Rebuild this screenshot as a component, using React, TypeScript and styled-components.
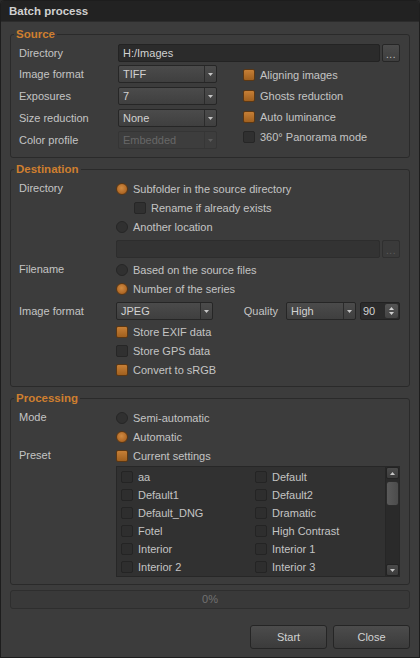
import React from "react";
import styled, { createGlobalStyle } from "styled-components";

const GlobalStyle = createGlobalStyle`
  html, body { margin: 0; padding: 0; background: #2b2b2b; }
  body {
    font-family: "Liberation Sans", Arial, sans-serif;
    font-size: 11px;
    color: #c4c4c4;
  }
  * { box-sizing: border-box; }
`;

const Window = styled.div`
  width: 420px;
  height: 658px;
  display: flex;
  flex-direction: column;
  background: #3c3c3c;
  border: 1px solid #1d1d1d;
  border-radius: 4px 4px 0 0;
  overflow: hidden;
`;

const TitleBar = styled.div`
  height: 21px;
  flex: none;
  display: flex;
  align-items: center;
  padding-left: 8px;
  background: #222222;
  border-bottom: 1px solid #2c2c2c;
  font-weight: bold;
  font-size: 11.5px;
  color: #d0d0d0;
`;

const Body = styled.div`
  flex: 1;
  display: flex;
  flex-direction: column;
  gap: 4px;
  padding: 5px 9px 8px 9px;
`;

const Group = styled.fieldset<{ $pb?: number }>`
  margin: 0;
  padding: 3px 9px ${(p) => p.$pb ?? 7}px 8px;
  border: 1px solid #2a2a2a;
  border-radius: 3px;
  min-inline-size: 0;
  display: flex;
  flex-direction: column;
`;

const Legend = styled.legend`
  margin-left: -5px;
  padding: 0 2px;
  font-weight: bold;
  font-size: 11.5px;
  line-height: 14px;
  color: #cf7f2f;
`;

const Field = styled.div<{ $label: number; $mt?: number }>`
  display: grid;
  grid-template-columns: ${(p) => p.$label}px 1fr;
  margin-top: ${(p) => p.$mt ?? 0}px;
`;

const Label = styled.div<{ $h: number }>`
  height: ${(p) => p.$h}px;
  line-height: ${(p) => p.$h}px;
  white-space: nowrap;
`;

const Stack = styled.div`
  display: flex;
  flex-direction: column;
`;

const Row = styled.div<{ $mt?: number; $mb?: number }>`
  display: flex;
  align-items: center;
  margin-top: ${(p) => p.$mt ?? 0}px;
  margin-bottom: ${(p) => p.$mb ?? 0}px;
`;

const PathInput = styled.div<{ $disabled?: boolean }>`
  flex: 1;
  height: 18px;
  line-height: 16px;
  padding-left: 4px;
  border: 1px solid ${(p) => (p.$disabled ? "#2d2d2d" : "#232323")};
  border-radius: 2px;
  background: ${(p) => (p.$disabled ? "#333333" : "#2b2b2b")};
  color: #d2d2d2;
`;

const DotsButton = styled.div<{ $disabled?: boolean }>`
  width: 18px;
  height: 18px;
  margin-left: 2px;
  display: flex;
  align-items: center;
  justify-content: center;
  border: 1px solid ${(p) => (p.$disabled ? "#2f2f2f" : "#262626")};
  border-radius: 2px;
  background: ${(p) =>
    p.$disabled ? "#3a3a3a" : "linear-gradient(#4b4b4b, #3e3e3e)"};
  color: ${(p) => (p.$disabled ? "#5e5e5e" : "#c4c4c4")};
  font-size: 10px;
  letter-spacing: 0.5px;
  line-height: 10px;
  padding-top: 3px;
`;

const ComboBox = styled.div<{ $w: number; $disabled?: boolean }>`
  width: ${(p) => p.$w}px;
  height: 18px;
  flex: none;
  display: flex;
  border: 1px solid ${(p) => (p.$disabled ? "#353535" : "#262626")};
  border-radius: 2px;
  background: ${(p) =>
    p.$disabled ? "#3d3d3d" : "linear-gradient(#4b4b4b, #3f3f3f)"};
  color: ${(p) => (p.$disabled ? "#676767" : "#d2d2d2")};
`;

const ComboText = styled.span`
  flex: 1;
  padding-left: 4px;
  line-height: 16px;
  white-space: nowrap;
  overflow: hidden;
`;

const ComboArrow = styled.span<{ $disabled?: boolean }>`
  width: 12px;
  display: flex;
  align-items: center;
  justify-content: center;
  border-left: 1px solid ${(p) => (p.$disabled ? "#363636" : "#2b2b2b")};
`;

const Caret = ({ up, color = "#c6c6c6" }: { up?: boolean; color?: string }) => (
  <svg width="5" height="3" viewBox="0 0 5 3">
    <path d={up ? "M0 3h5L2.5 0z" : "M0 0h5L2.5 3z"} fill={color} />
  </svg>
);

const Combo = ({ w, value, disabled }: { w: number; value: string; disabled?: boolean }) => (
  <ComboBox $w={w} $disabled={disabled}>
    <ComboText>{value}</ComboText>
    <ComboArrow $disabled={disabled}>
      <Caret color={disabled ? "#5c5c5c" : "#c6c6c6"} />
    </ComboArrow>
  </ComboBox>
);

const OptionRow = styled.div<{ $h?: number; $indent?: number }>`
  height: ${(p) => p.$h ?? 19}px;
  display: flex;
  align-items: center;
  gap: 5px;
  padding-left: ${(p) => p.$indent ?? 0}px;
  white-space: nowrap;
`;

const Box = styled.span<{ $on?: boolean }>`
  width: 12px;
  height: 12px;
  flex: none;
  border-radius: 2px;
  border: 1px solid ${(p) => (p.$on ? "#5a3714" : "#262626")};
  background: ${(p) =>
    p.$on ? "linear-gradient(#c67f36, #a0601f)" : "#303030"};
`;

const Dot = styled.span<{ $on?: boolean }>`
  width: 12px;
  height: 12px;
  flex: none;
  border-radius: 50%;
  border: 1px solid ${(p) => (p.$on ? "#5a3714" : "#262626")};
  background: ${(p) =>
    p.$on
      ? "radial-gradient(circle at 45% 40%, #cf8a42 0%, #ad6624 70%)"
      : "#303030"};
`;

const SourceColumns = styled.div`
  display: flex;
  margin-top: 3px;
`;

const LeftStack = styled.div`
  display: flex;
  flex-direction: column;
  gap: 4px;
`;

const RightStack = styled.div`
  display: flex;
  flex-direction: column;
  padding-left: 26px;
`;

const QualityLabel = styled.span`
  margin-left: auto;
  margin-right: 8px;
`;

const SpinBox = styled.div`
  width: 40px;
  height: 18px;
  margin-left: 4px;
  display: flex;
  align-items: center;
  border: 1px solid #222222;
  border-radius: 2px;
  background: #2b2b2b;
  color: #d2d2d2;
`;

const SpinText = styled.span`
  flex: 1;
  padding-left: 2px;
`;

const SpinButtons = styled.span`
  width: 13px;
  height: 14px;
  margin-right: 1px;
  display: flex;
  flex-direction: column;
  align-items: center;
  justify-content: center;
  gap: 2px;
  border-radius: 2px;
  background: linear-gradient(#545454, #444444);
`;

const ListBox = styled.div`
  height: 111px;
  margin-top: 1px;
  display: flex;
  border: 1px solid #272727;
  background: #313131;
`;

const ListGrid = styled.div`
  flex: 1;
  display: grid;
  grid-template-columns: 1fr 1fr;
  grid-auto-rows: 18px;
  padding-top: 1px;
`;

const ListItem = styled.div`
  display: flex;
  align-items: center;
  gap: 5px;
  padding-left: 4px;
  white-space: nowrap;
`;

const ListCheck = styled.span`
  width: 12px;
  height: 12px;
  border-radius: 2px;
  border: 1px solid #242424;
  background: #2e2e2e;
`;

const ScrollBar = styled.div`
  width: 14px;
  display: flex;
  flex-direction: column;
  background: #2a2a2a;
  border-left: 1px solid #262626;
`;

const ScrollButton = styled.div`
  height: 12px;
  display: flex;
  align-items: center;
  justify-content: center;
  border: 1px solid #232323;
  border-radius: 2px;
  background: linear-gradient(#4a4a4a, #3c3c3c);
`;

const ScrollThumb = styled.div`
  height: 25px;
  margin: 2px 0 0;
  border: 1px solid #2c2c2c;
  border-radius: 3px;
  background: linear-gradient(90deg, #5a5a5a, #4c4c4c);
`;

const ScrollTrack = styled.div`
  flex: 1;
`;

const Progress = styled.div`
  height: 19px;
  margin-top: 1px;
  border: 1px solid #2e2e2e;
  border-radius: 3px;
  background: #393939;
  color: #727272;
  text-align: center;
  line-height: 17px;
`;

const Footer = styled.div`
  margin-top: 12px;
  display: flex;
  justify-content: flex-end;
  gap: 6px;
`;

const Button = styled.button`
  width: 77px;
  height: 24px;
  padding: 0;
  border: 1px solid #252525;
  border-radius: 3px;
  background: linear-gradient(#4c4c4c, #3b3b3b);
  color: #d2d2d2;
  font: inherit;
`;

const sourceOptions: { label: string; on: boolean; h: number }[] = [
  { label: "Aligning images", on: true, h: 20 },
  { label: "Ghosts reduction", on: true, h: 22 },
  { label: "Auto luminance", on: true, h: 20 },
  { label: "360° Panorama mode", on: false, h: 20 },
];

const presets: [string, string][] = [
  ["aa", "Default"],
  ["Default1", "Default2"],
  ["Default_DNG", "Dramatic"],
  ["Fotel", "High Contrast"],
  ["Interior", "Interior 1"],
  ["Interior 2", "Interior 3"],
];

export default function App() {
  return (
    <>
      <GlobalStyle />
      <Window>
        <TitleBar>Batch process</TitleBar>
        <Body>
          <Group $pb={8}>
            <Legend>Source</Legend>
            <Field $label={99}>
              <Label $h={18}>Directory</Label>
              <Row>
                <PathInput>H:/Images</PathInput>
                <DotsButton>...</DotsButton>
              </Row>
            </Field>
            <SourceColumns>
              <LeftStack>
                <Field $label={99}>
                  <Label $h={18}>Image format</Label>
                  <Combo w={99} value="TIFF" />
                </Field>
                <Field $label={99}>
                  <Label $h={18}>Exposures</Label>
                  <Combo w={99} value="7" />
                </Field>
                <Field $label={99}>
                  <Label $h={18}>Size reduction</Label>
                  <Combo w={99} value="None" />
                </Field>
                <Field $label={99}>
                  <Label $h={18}>Color profile</Label>
                  <Combo w={99} value="Embedded" disabled />
                </Field>
              </LeftStack>
              <RightStack>
                {sourceOptions.map((o) => (
                  <OptionRow key={o.label} $h={o.h}>
                    <Box $on={o.on} />
                    {o.label}
                  </OptionRow>
                ))}
              </RightStack>
            </SourceColumns>
          </Group>

          <Group>
            <Legend>Destination</Legend>
            <Field $label={97}>
              <Label $h={19}>Directory</Label>
              <Stack>
                <OptionRow>
                  <Dot $on />
                  Subfolder in the source directory
                </OptionRow>
                <OptionRow $indent={18}>
                  <Box />
                  Rename if already exists
                </OptionRow>
                <OptionRow>
                  <Dot />
                  Another location
                </OptionRow>
                <Row $mt={4}>
                  <PathInput $disabled />
                  <DotsButton $disabled>...</DotsButton>
                </Row>
              </Stack>
            </Field>
            <Field $label={97} $mt={2}>
              <Label $h={19}>Filename</Label>
              <Stack>
                <OptionRow>
                  <Dot />
                  Based on the source files
                </OptionRow>
                <OptionRow>
                  <Dot $on />
                  Number of the series
                </OptionRow>
              </Stack>
            </Field>
            <Field $label={97} $mt={4}>
              <Label $h={18}>Image format</Label>
              <Stack>
                <Row $mb={2}>
                  <Combo w={97} value="JPEG" />
                  <QualityLabel>Quality</QualityLabel>
                  <Combo w={70} value="High" />
                  <SpinBox>
                    <SpinText>90</SpinText>
                    <SpinButtons>
                      <Caret up color="#d0d0d0" />
                      <Caret color="#d0d0d0" />
                    </SpinButtons>
                  </SpinBox>
                </Row>
                <OptionRow>
                  <Box $on />
                  Store EXIF data
                </OptionRow>
                <OptionRow>
                  <Box />
                  Store GPS data
                </OptionRow>
                <OptionRow>
                  <Box $on />
                  Convert to sRGB
                </OptionRow>
              </Stack>
            </Field>
          </Group>

          <Group>
            <Legend>Processing</Legend>
            <Field $label={97}>
              <Label $h={19}>Mode</Label>
              <Stack>
                <OptionRow>
                  <Dot />
                  Semi-automatic
                </OptionRow>
                <OptionRow>
                  <Dot $on />
                  Automatic
                </OptionRow>
              </Stack>
            </Field>
            <Field $label={97}>
              <Label $h={19}>Preset</Label>
              <Stack>
                <OptionRow>
                  <Box $on />
                  Current settings
                </OptionRow>
                <ListBox>
                  <ListGrid>
                    {presets.flat().map((name) => (
                      <ListItem key={name}>
                        <ListCheck />
                        {name}
                      </ListItem>
                    ))}
                  </ListGrid>
                  <ScrollBar>
                    <ScrollButton>
                      <Caret up />
                    </ScrollButton>
                    <ScrollThumb />
                    <ScrollTrack />
                    <ScrollButton>
                      <Caret />
                    </ScrollButton>
                  </ScrollBar>
                </ListBox>
              </Stack>
            </Field>
          </Group>

          <Progress>0%</Progress>
          <Footer>
            <Button>Start</Button>
            <Button>Close</Button>
          </Footer>
        </Body>
      </Window>
    </>
  );
}
